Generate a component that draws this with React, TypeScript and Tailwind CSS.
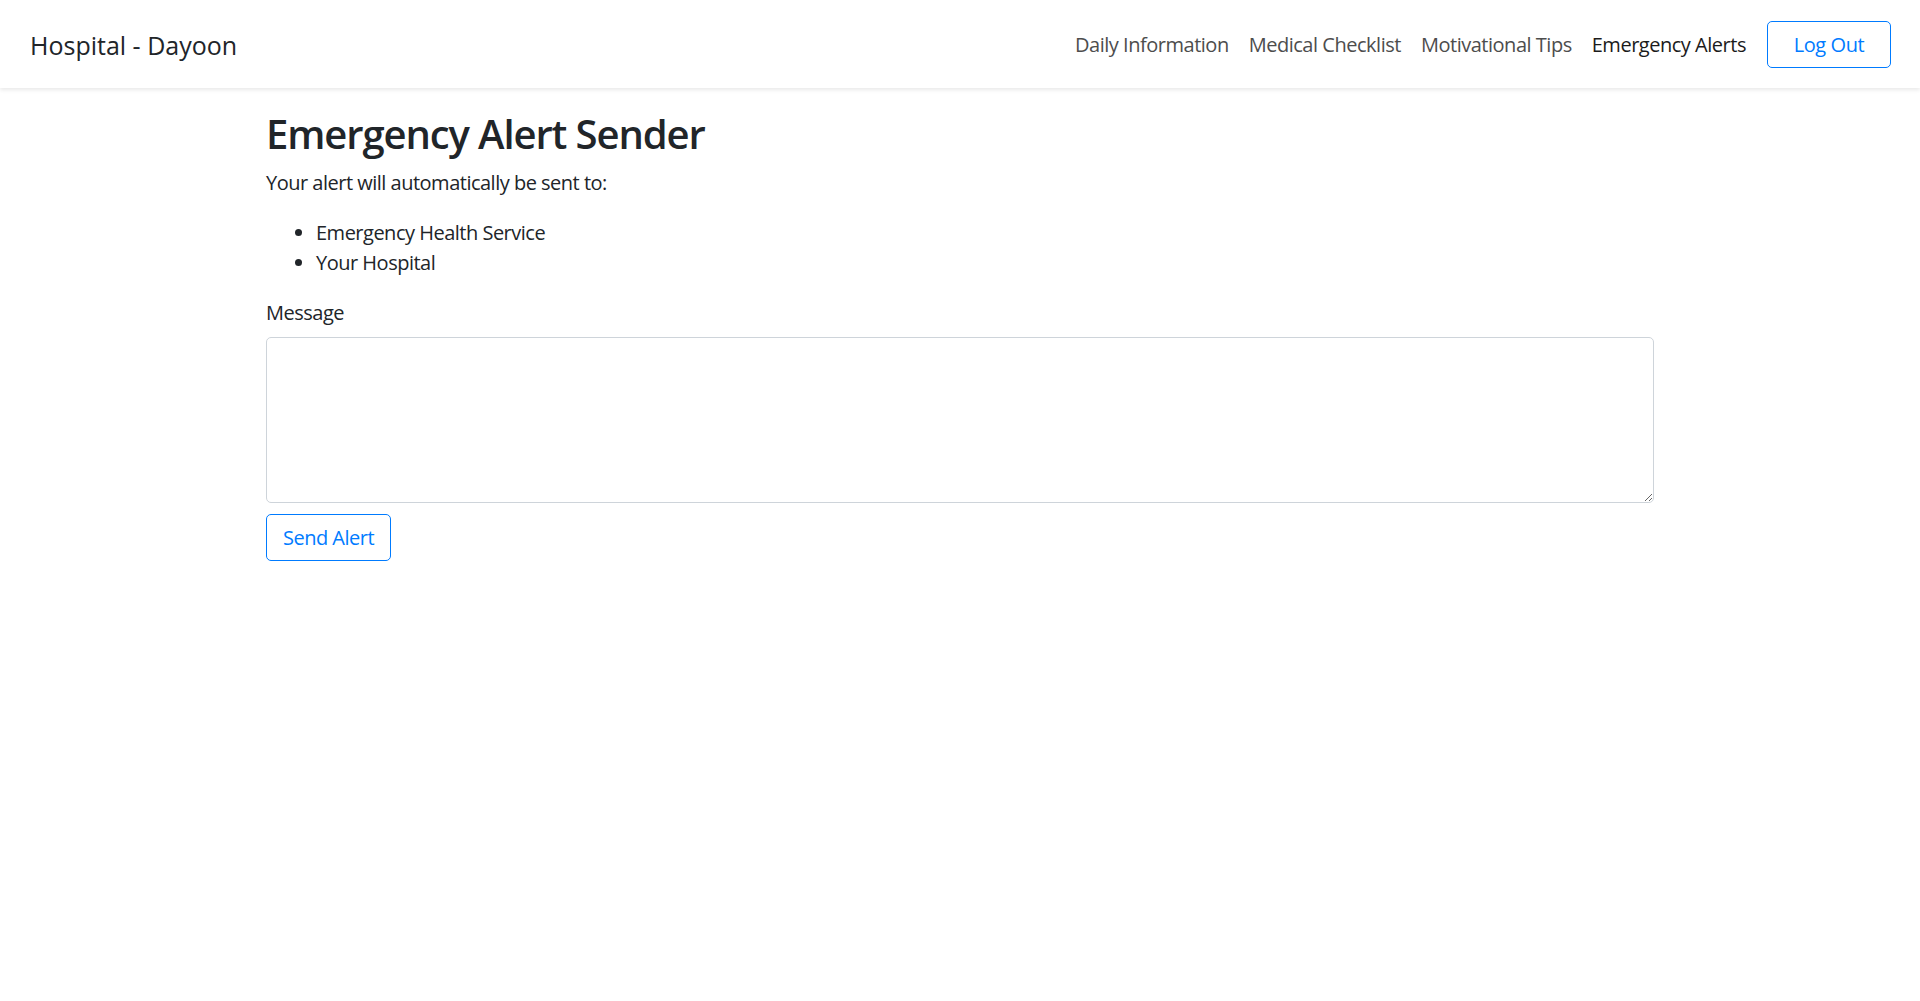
import { useState } from "react";

function NavBar() {
	const links = ["Daily Information", "Medical Checklist", "Motivational Tips", "Emergency Alerts"];

	return (
		<nav className="h-[88px] flex items-center justify-between pl-[30px] pr-[29px] bg-white shadow-[0_2px_4px_rgba(0,0,0,0.09)] relative">
			<a href="#" className="text-[25px] leading-[37px] pt-[3px] text-[#212529] whitespace-nowrap">
				Hospital - Dayoon
			</a>
			<div className="flex items-center pt-[1px]">
				<ul className="flex items-center pt-[1px] tracking-[-0.48px]">
					{links.map((l) => (
						<li key={l}>
							<a
								href="#"
								className={
									l === "Emergency Alerts"
										? "block px-[10px] text-[20px] leading-[30px] text-[#1b1b1b]"
										: "block px-[10px] text-[20px] leading-[30px] text-[#4d4d4d]"
								}
							>
								{l}
							</a>
						</li>
					))}
				</ul>
				<button
					type="button"
					className="ml-[11px] h-[47px] w-[124px] border border-[#007bff] rounded-[5px] text-[20px] leading-[30px] tracking-[-0.4px] text-[#007bff] bg-white"
				>
					Log Out
				</button>
			</div>
		</nav>
	);
}

function App() {
	const [message, setMessage] = useState("");

	return (
		<div className="min-h-screen bg-white text-[#212529] font-['Open_Sans',sans-serif]">
			<NavBar />
			<main className="w-[1388px] ml-[266px] tracking-[-0.5px]">
				<h1 className="mt-[22px] text-[40px] leading-[48px] font-semibold tracking-[-1.1px]">Emergency Alert Sender</h1>
				<p className="mt-[10px] text-[20px] leading-[30px]">Your alert will automatically be sent to:</p>
				<ul className="mt-[20px] pl-[50px] list-disc text-[20px] leading-[30px]">
					<li>Emergency Health Service</li>
					<li>Your Hospital</li>
				</ul>
				<form onSubmit={(e) => e.preventDefault()}>
					<label htmlFor="msg" className="block mt-[20px] text-[20px] leading-[30px]">
						Message
					</label>
					<textarea
						id="msg"
						value={message}
						onChange={(e) => setMessage(e.target.value)}
						className="block mt-[9px] w-full h-[166px] border border-[#ced4da] rounded-[5px] px-[15px] py-[7px] text-[20px] outline-none"
					/>
					<button
						type="submit"
						className="mt-[11px] h-[47px] w-[125px] border border-[#007bff] rounded-[5px] text-[20px] leading-[30px] text-[#007bff] bg-white"
					>
						Send Alert
					</button>
				</form>
			</main>
		</div>
	);
}

export default App;
